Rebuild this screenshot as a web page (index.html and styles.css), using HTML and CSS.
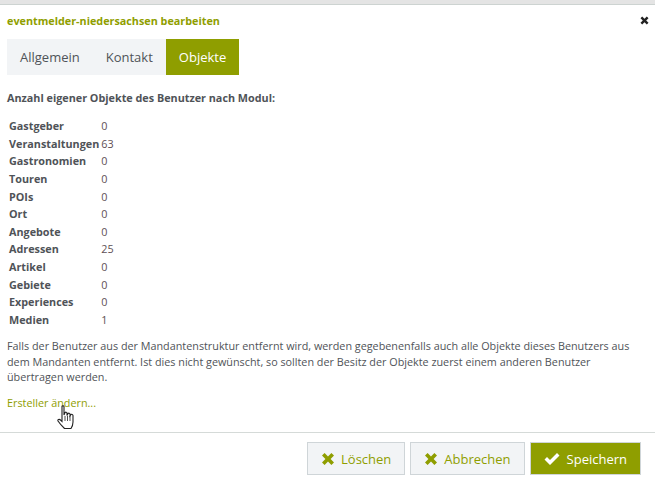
FILE: index.html
```html
<!DOCTYPE html>
<html lang="de">
<head>
    <meta charset="UTF-8">
    <title>eventmelder-niedersachsen bearbeiten</title>
    <link rel="stylesheet" href="styles.css">
</head>

<body>
<div class="top_strip"></div>
<div class="dialog">
    <div class="dialog_head">
        <div class="dialog_title">eventmelder-niedersachsen bearbeiten</div>
        <svg class="close_icon" width="9" height="9" viewBox="0 0 9 9"><path d="M0.5 2.2 2.2 0.5 4.5 2.8 6.8 0.5 8.5 2.2 6.2 4.5 8.5 6.8 6.8 8.5 4.5 6.2 2.2 8.5 0.5 6.8 2.8 4.5Z"/></svg>
    </div>
    <div class="tabs">
        <a class="tab">Allgemein</a>
        <a class="tab">Kontakt</a>
        <a class="tab tab_active">Objekte</a>
    </div>
    <div class="content">
        <p class="lead">Anzahl eigener Objekte des Benutzer nach Modul:</p>
        <table class="counts">
            <tr><th>Gastgeber</th><td>0</td></tr>
            <tr><th>Veranstaltungen</th><td>63</td></tr>
            <tr><th>Gastronomien</th><td>0</td></tr>
            <tr><th>Touren</th><td>0</td></tr>
            <tr><th>POIs</th><td>0</td></tr>
            <tr><th>Ort</th><td>0</td></tr>
            <tr><th>Angebote</th><td>0</td></tr>
            <tr><th>Adressen</th><td>25</td></tr>
            <tr><th>Artikel</th><td>0</td></tr>
            <tr><th>Gebiete</th><td>0</td></tr>
            <tr><th>Experiences</th><td>0</td></tr>
            <tr><th>Medien</th><td>1</td></tr>
        </table>
        <p class="note">Falls der Benutzer aus der Mandantenstruktur entfernt wird, werden gegebenenfalls auch alle Objekte dieses Benutzers aus dem Mandanten entfernt. Ist dies nicht gewünscht, so sollten der Besitz der Objekte zuerst einem anderen Benutzer übertragen werden.</p>
        <a class="change_link">Ersteller ändern...</a>
    </div>
    <div class="footer">
        <button class="btn">
            <svg class="btn_icon" width="14" height="14" viewBox="0 0 14 14"><path d="M1 3.6 3.6 1 7 4.4 10.4 1 13 3.6 9.6 7 13 10.4 10.4 13 7 9.6 3.6 13 1 10.4 4.4 7Z"/></svg>
            Löschen
        </button>
        <button class="btn">
            <svg class="btn_icon" width="14" height="14" viewBox="0 0 14 14"><path d="M1 3.6 3.6 1 7 4.4 10.4 1 13 3.6 9.6 7 13 10.4 10.4 13 7 9.6 3.6 13 1 10.4 4.4 7Z"/></svg>
            Abbrechen
        </button>
        <button class="btn btn_primary">
            <svg class="btn_icon" width="16" height="14" viewBox="0 0 16 14"><path d="M0.5 7.5 3 5 6 8 13 1 15.5 3.5 6 13Z"/></svg>
            Speichern
        </button>
    </div>
</div>
<svg class="cursor" width="20" height="25" viewBox="0 0 20 25"><path d="M5 1.5C5 0.6 7 0.6 7 1.5V10L8 7.5C8.5 7 10 7 10 8V10.5L11 8.5C11.5 8 13 8 13 9V11L14 9.5C14.5 9 16 9.5 16 10.5V17C16 20 15 22 14 23.5H7.5C6 22 3 19 1 16C0.5 15 2 13.5 3.5 15L5 16.5Z" fill="#fff" stroke="#222" stroke-width="1.1"/><path d="M8 11V16M10.5 11V16M13 11V16" stroke="#222" stroke-width="0.8" fill="none"/></svg>
</body>
</html>
```

FILE: styles.css
```css
* {
    margin: 0;
    padding: 0;
    box-sizing: border-box;
}

body {
    position: relative;
    height: 489px;
    overflow: hidden;
    background: white;
    color: #4f5358;
    font-family: "Open Sans", "Liberation Sans", sans-serif;
    font-size: 12px;
}

.top_strip {
    height: 5px;
    background: #e4e4e4;
    border-bottom: 1px solid #cdd3d1;
}

.dialog_head {
    display: flex;
    justify-content: space-between;
    align-items: center;
    height: 34px;
    padding: 0 6px 4px 7px;
}

.dialog_title {
    color: #8f9e00;
    font-size: 10.8px;
    font-weight: 700;
}

.close_icon {
    fill: #222;
}

.tabs {
    display: flex;
    width: 232px;
    height: 36px;
    margin-left: 7px;
    background: #f2f4f6;
}

.tab {
    padding: 0 13px;
    font-size: 13px;
    line-height: 36px;
}

.tab_active {
    margin-left: auto;
    background: #8f9e00;
    color: white;
}

.content {
    padding: 0 7px;
}

.lead {
    margin-top: 15px;
    font-size: 10.8px;
    font-weight: 700;
    line-height: 16px;
}

.counts {
    margin-top: 11px;
    margin-left: 2px;
    border-collapse: collapse;
    font-size: 10.8px;
}

.counts th {
    padding-right: 2px;
    height: 17.6px;
    font-weight: 700;
    text-align: left;
}

.counts td {
    color: #5e4f55;
}

.note {
    margin-top: 10px;
    font-size: 10.8px;
    line-height: 15.4px;
}

.change_link {
    display: block;
    margin-top: 11px;
    color: #8f9e00;
    font-size: 10.8px;
    line-height: 15px;
}

.footer {
    display: flex;
    justify-content: flex-end;
    gap: 5px;
    margin-top: 22px;
    padding: 9px 14px 0 0;
    border-top: 1px solid #d5dad8;
}

.btn {
    display: flex;
    align-items: center;
    gap: 6px;
    height: 33px;
    padding: 0 13px;
    background: #f2f4f6;
    border: 1px solid #cfd5d8;
    color: #8f9e00;
    font-family: inherit;
    font-size: 13px;
}

.btn_icon {
    fill: #8f9e00;
}

.btn_primary {
    gap: 7px;
    background: #8f9e00;
    color: white;
}

.btn_primary .btn_icon {
    fill: white;
}

.cursor {
    position: absolute;
    left: 57px;
    top: 405px;
}
```
